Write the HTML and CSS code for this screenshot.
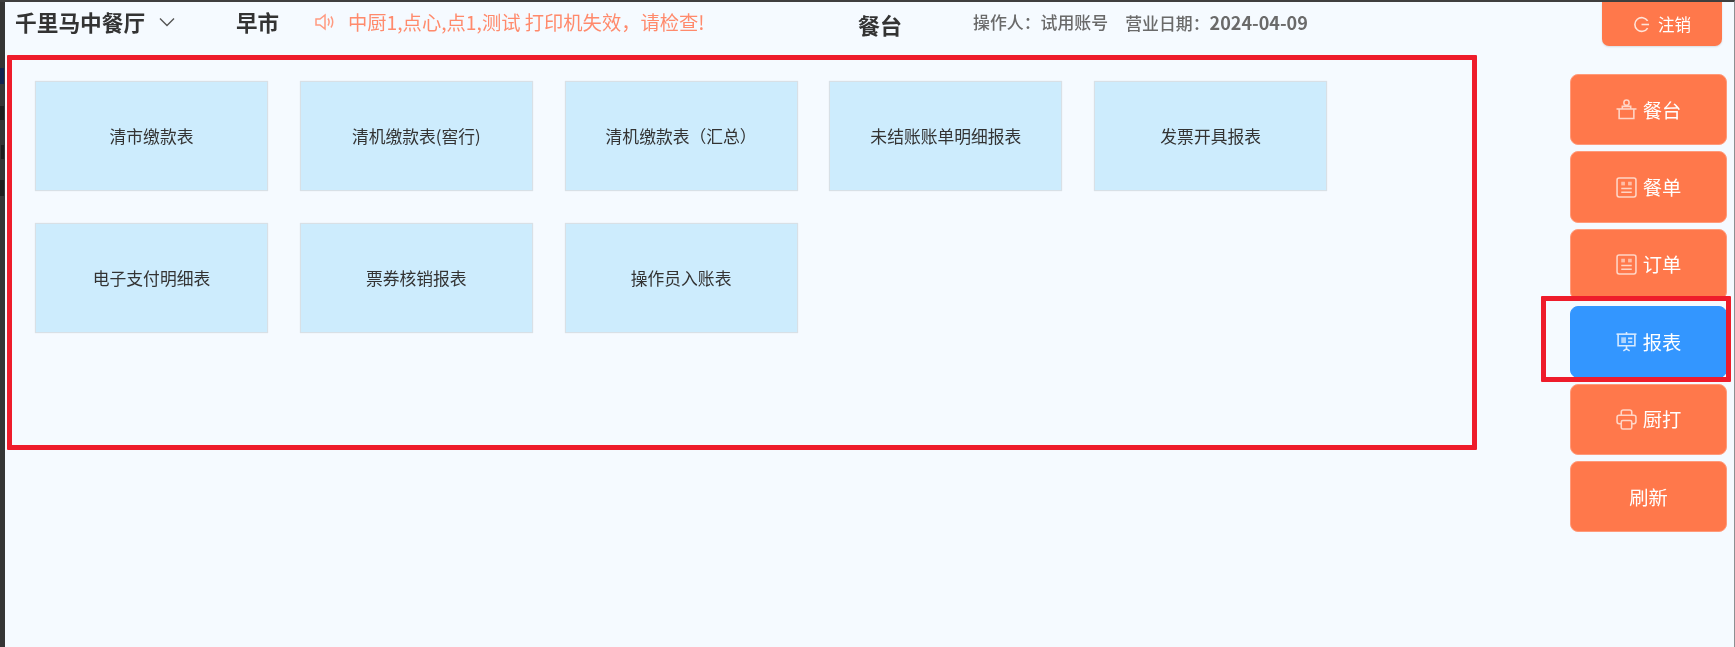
FILE: index.html
```html
<!DOCTYPE html>
<html lang="zh-CN">
<head>
<meta charset="utf-8">
<title>报表</title>
<link rel="stylesheet" href="styles.css">
</head>
<body>
<div class="app">
  <div class="edge">
    <span class="edge-a"></span>
    <span class="edge-b"></span>
    <span class="edge-c"></span>
    <span class="edge-d"></span>
  </div>
  <div class="page">
    <header class="top">
      <div class="brand">千里马中餐厅
        <svg class="chev" viewBox="0 0 16 10"><path d="M1 1.500l7 7 7-7"/></svg>
      </div>
      <div class="period">早市</div>
      <svg class="horn" viewBox="0 0 20 20"><path d="M2 7h4l5-4v14l-5-4H2z"/><path d="M14 6.500c1.400 2.200 1.400 4.800 0 7"/><path d="M17 4.500c2.200 3.500 2.200 7.500 0 11"/></svg>
      <div class="notice">中厨1,点心,点1,测试 打印机失效，请检查!</div>
      <div class="section">餐台</div>
      <div class="meta"><span>操作人：试用账号</span><span>营业日期：<b>2024-04-09</b></span></div>
      <button class="logout">
        <svg class="ic-out" viewBox="0 0 18 18"><path d="M15.500 5.200A7.300 7.300 0 1 0 15.500 12.800"/><path d="M9 9h8"/></svg>
        注销
      </button>
    </header>
    <div class="body">
      <main class="reports">
        <div class="card">清市缴款表</div>
        <div class="card">清机缴款表(窖行)</div>
        <div class="card">清机缴款表（汇总）</div>
        <div class="card">未结账账单明细报表</div>
        <div class="card">发票开具报表</div>
        <div class="card">电子支付明细表</div>
        <div class="card">票券核销报表</div>
        <div class="card">操作员入账表</div>
      </main>
      <nav class="side">
        <button class="nav">
          <svg class="ic" viewBox="0 0 20 20"><circle cx="10" cy="3.500" r="2.500"/><path d="M6 9.500V7h8v2.500"/><path d="M0.500 9.500h19"/><path d="M3 9.500v9h14v-9"/></svg>
          餐台
        </button>
        <button class="nav">
          <svg class="ic" viewBox="0 0 20 20"><rect x="1" y="1" width="18" height="18" rx="2"/><rect class="fill" x="5" y="4.500" width="3.500" height="3.500"/><rect class="fill" x="11.500" y="4.500" width="3.500" height="3.500"/><path d="M5 11h10M5 14.500h10"/></svg>
          餐单
        </button>
        <button class="nav">
          <svg class="ic" viewBox="0 0 20 20"><rect x="1" y="1" width="18" height="18" rx="2"/><rect class="fill" x="5" y="4.500" width="3.500" height="3.500"/><rect class="fill" x="11.500" y="4.500" width="3.500" height="3.500"/><path d="M5 11h10M5 14.500h10"/></svg>
          订单
        </button>
        <button class="nav active">
          <svg class="ic" viewBox="0 0 20 20"><path d="M0.500 3h19"/><path d="M2 3v11h16V3"/><path d="M10 1v2M10 14v3M7 19l3-2 3 2"/><rect class="fill" x="5" y="6" width="4.500" height="5.500"/><path d="M11.500 7h4M11.500 10.500h4"/></svg>
          报表
        </button>
        <button class="nav">
          <svg class="ic" viewBox="0 0 20 20"><path d="M5 6V3a2 2 0 0 1 2-2h6a2 2 0 0 1 2 2v3"/><path d="M5 14H3a2 2 0 0 1-2-2V8a2 2 0 0 1 2-2h14a2 2 0 0 1 2 2v4a2 2 0 0 1-2 2h-2"/><rect x="5" y="11" width="10" height="8" rx="1.500"/></svg>
          厨打
        </button>
        <button class="nav">刷新</button>
      </nav>
    </div>
  </div>
</div>
<div class="mark mark-main"></div>
<div class="mark mark-nav"></div>
</body>
</html>
```
FILE: styles.css
```css
* { box-sizing: border-box; }
html, body { margin: 0; height: 100%; overflow: hidden; }
body {
  position: relative;
  width: 1735px;
  height: 647px;
  background: #f5faff;
  font-family: "Noto Sans CJK SC", "Noto Sans", sans-serif;
  color: #333;
  filter: blur(0.5px);
}
.app {
  display: flex;
  height: 647px;
  border-top: 2px solid #3f3f3f;
  border-right: 1px solid #8d8f92;
}
.edge {
  position: relative;
  flex: 0 0 5px;
  background: #353535;
  overflow: hidden;
}
.edge span { position: absolute; left: 0; width: 4px; background: #1e1e1e; }
.edge .edge-a { top: 66px; height: 16px; background: #10224f; }
.edge .edge-b { top: 104px; height: 14px; }
.edge .edge-c { top: 143px; height: 14px; left: 1px; width: 3px; }
.edge .edge-d { top: 178px; height: 16px; }
.page { flex: 1; min-width: 0; display: flex; flex-direction: column; }
.top {
  flex: 0 0 72px;
  display: flex;
  align-items: flex-start;
  padding: 0 12px 0 10px;
}
.brand {
  width: 221px;
  height: 40px;
  display: flex;
  align-items: center;
  font-size: 21.700px;
  font-weight: 700;
  line-height: 40px;
  white-space: nowrap;
}
.chev { width: 18px; height: 10px; margin-left: 13px; fill: none; stroke: #555; stroke-width: 1.400; }
.period {
  width: 79px;
  font-size: 21.500px;
  font-weight: 700;
  line-height: 40px;
}
.horn { width: 20px; height: 20px; margin-top: 10px; margin-left: -1px; fill: none; stroke: #ff9a80; stroke-width: 1.500; }
.notice {
  width: 510px;
  margin-left: 14px;
  font-size: 19.300px;
  line-height: 40px;
  color: #ff8a6c;
  white-space: nowrap;
}
.section {
  width: 115px;
  font-size: 22px;
  font-weight: 700;
  line-height: 44px;
}
.meta {
  display: flex;
  gap: 17px;
  font-size: 16.900px;
  font-weight: 500;
  line-height: 40px;
  color: #6a6a6a;
  white-space: nowrap;
}
.meta b { font-size: 18px; font-weight: 700; }
.logout {
  width: 120px;
  height: 44px;
  margin-left: auto;
  border: 0;
  border-radius: 0 0 7px 7px;
  background: #ff784b;
  color: #fff;
  font: 400 16.500px "Noto Sans CJK SC", sans-serif;
  display: flex;
  align-items: center;
  justify-content: center;
  gap: 8px;
  box-shadow: 0 1px 2px rgba(0, 0, 0, .12);
}
.ic-out { width: 17px; height: 17px; fill: none; stroke: #ffe3d8; stroke-width: 1.700; }
.body { flex: 1; display: flex; align-items: flex-start; }
.reports {
  display: grid;
  grid-template-columns: repeat(5, 233px);
  grid-auto-rows: 110px;
  column-gap: 31.800px;
  row-gap: 32px;
  margin: 7px 0 0 30px;
}
.card {
  display: flex;
  align-items: center;
  justify-content: center;
  background: #cdecfd;
  border: 1px solid #d8e0e6;
  box-shadow: 0 0 1px rgba(0, 0, 0, .1);
  font-size: 16.800px;
  color: #333;
  white-space: nowrap;
}
.side {
  display: flex;
  flex-direction: column;
  gap: 6px;
  width: 157px;
  margin-left: auto;
  margin-right: 7px;
}
.nav {
  height: 71.400px;
  border: 1px solid #ff9a7a;
  border-radius: 8px;
  background: #ff784b;
  color: #fff;
  font: 400 19.300px "Noto Sans CJK SC", sans-serif;
  display: flex;
  align-items: center;
  justify-content: center;
  gap: 6px;
}
.nav.active { background: #3396ff; border-color: #3396ff; }
.ic { width: 21px; height: 21px; fill: none; stroke: #ffd5c6; stroke-width: 1.500; }
.active .ic { stroke: #d9ebff; }
.ic .fill { fill: #ffd5c6; stroke: none; opacity: .75; }
.active .ic .fill { fill: #d9ebff; }
.mark { position: absolute; border: 5px solid #ee1c2b; pointer-events: none; border-radius: 1px; }
.mark-main { left: 7px; top: 55px; width: 1470px; height: 395px; }
.mark-nav { left: 1541px; top: 296px; width: 190px; height: 86px; }
```
